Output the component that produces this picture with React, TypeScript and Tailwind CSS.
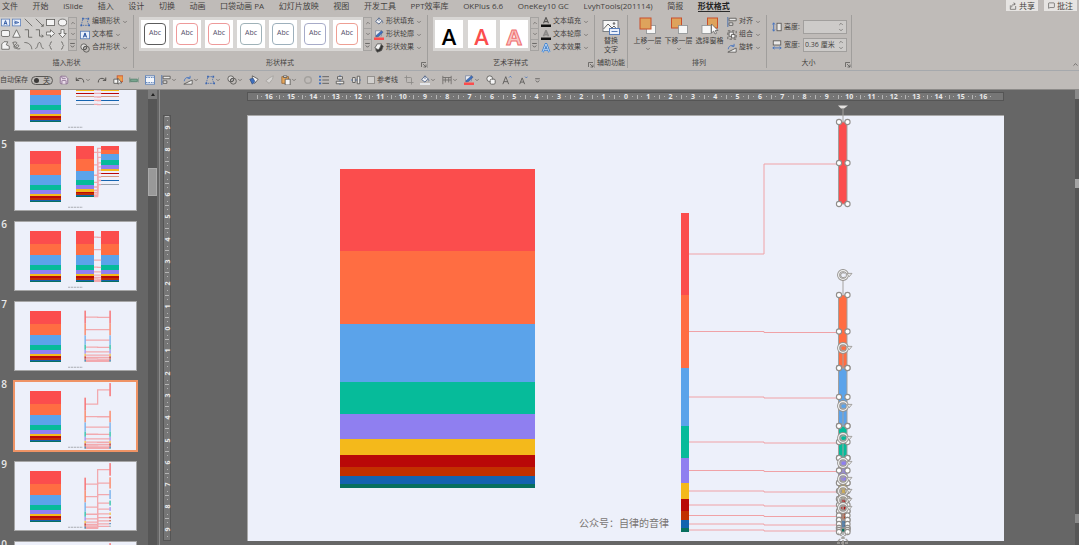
import type { ReactNode } from "react";
import { ChevronDown, ChevronUp, Crop, MessageSquare, Redo, Save, Undo } from "lucide-react";

/* ---------- slide drawing ---------- */

const COLORS = ["#fb4d4d", "#ff6d42", "#5ba3ea", "#06bb9a", "#8f7ff0", "#f4b91b", "#b90808", "#c23000", "#1463b0", "#08705f"];
const HEIGHTS = [82, 73, 58, 32, 25, 16, 12, 9, 8, 4];

type Seg = { y: number; h: number; fill: string };

// Stack the segments from `top`, with an optional gap and a scale on every height.
function stack(top: number, scale = 1, gap = 0): Seg[] {
  let y = top;
  return HEIGHTS.map((height, i) => {
    const seg = { y, h: height * scale, fill: COLORS[i] };
    y += height * scale + gap;
    return seg;
  });
}

const BASE = stack(54);
const LEFT_BAR = stack(98);
const RIGHT_BAR = LEFT_BAR.map((s, i) => (i === 0 ? { ...s, y: 7 } : s));
const SPREAD_BAR = stack(7, 0.96, 10);
// Column whose last segments have collapsed to separate thin strips
const STRIP_COLORS = [...COLORS.slice(0, 7), "#d89a80", "#1463b0", "#98a3b0"];
const COLLAPSED: Seg[] = [27, 50, 77, 114, 144, 168, 192, 214, 236, 262].map((y, i) => ({
  y,
  h: [23, 27, 37, 30, 22, 14, 8, 8, 8, 7][i],
  fill: STRIP_COLORS[i],
}));

const mid = (s: Seg) => s.y + s.h / 2;

function Bar({ x, w, segs, soft = false }: { x: number; w: number; segs: Seg[]; soft?: boolean }) {
  return (
    <g opacity={soft ? 0.7 : 1} shapeRendering={soft ? "auto" : "crispEdges"}>
      {segs.map((s, i) => (
        <rect key={i} x={x} y={s.y} width={w} height={s.h} fill={s.fill} />
      ))}
    </g>
  );
}

function Links({ x1, x2, from, to, width, color }: { x1: number; x2: number; from: Seg[]; to: Seg[]; width: number; color: string }) {
  const half = Math.round((x1 + x2) / 2);
  return (
    <g fill="none" stroke={color} strokeWidth={width}>
      {from.map((s, i) => (
        <path key={i} d={`M${x1} ${mid(s)}H${half}V${mid(to[i]) + 1}H${x2}`} />
      ))}
    </g>
  );
}

function MiniSlide({ kind }: { kind: number }) {
  const link = { width: 8, color: "#f2a9ae" };
  return (
    <svg viewBox="0 0 757 426" className="block w-full bg-[#edf0fa]" aria-hidden="true">
      <Bar x={93} w={195} segs={BASE} />
      {kind === 4 && (
        <>
          <Bar x={381} w={113} segs={COLLAPSED} />
          <Bar x={539} w={113} segs={COLLAPSED} />
          <Links x1={494} x2={539} from={COLLAPSED} to={COLLAPSED} {...link} />
        </>
      )}
      {kind === 5 && (
        <>
          <Bar x={381} w={113} segs={stack(24)} />
          <Bar x={539} w={113} segs={COLLAPSED} />
          <Links x1={494} x2={539} from={stack(24)} to={COLLAPSED} {...link} />
        </>
      )}
      {kind === 6 && (
        <>
          <Bar x={381} w={113} segs={BASE} />
          <Bar x={539} w={113} segs={BASE} />
          <Links x1={494} x2={539} from={BASE} to={BASE} {...link} />
        </>
      )}
      {kind === 7 && (
        <>
          <Links x1={442} x2={591} from={BASE} to={BASE} {...link} />
          <Bar x={434} w={10} segs={BASE} soft />
          <Bar x={590} w={10} segs={BASE} soft />
        </>
      )}
      {kind === 8 && (
        <>
          <Links x1={442} x2={591} from={LEFT_BAR} to={RIGHT_BAR} {...link} />
          <Bar x={434} w={10} segs={LEFT_BAR} soft />
          <Bar x={590} w={10} segs={RIGHT_BAR} soft />
        </>
      )}
      {kind >= 9 && (
        <>
          <Links x1={442} x2={591} from={LEFT_BAR} to={SPREAD_BAR} {...link} />
          <Bar x={434} w={10} segs={LEFT_BAR} soft />
          <Bar x={590} w={10} segs={SPREAD_BAR} soft />
        </>
      )}
      <path d="M332 408H424" stroke="#a9abb2" strokeWidth="7" strokeDasharray="14 4" />
    </svg>
  );
}

function RotateHandle({ y }: { y: number }) {
  return (
    <g fill="none">
      <path d={`M596 ${y + 5}V${y + 19}`} stroke="#a5a29f" />
      <circle cx="596" cy={y} r="4.4" stroke="#96938f" strokeWidth="3" />
      <circle cx="596" cy={y} r="4.4" stroke="#f1f1f1" strokeWidth="1.2" />
      <path d={`M597.8 ${y - 1.6}A2.4 2.4 0 1 0 597.8 ${y + 1.8}`} stroke="#a5a29f" strokeWidth="1.1" />
      <path d={`M599.5 ${y - 1.6}H605L602.2 ${y + 1.8}Z`} fill="#e8e8e8" stroke="#96938f" strokeWidth="0.8" />
    </g>
  );
}

function MainSlide() {
  return (
    <svg viewBox="0 0 757 426" className="block w-full overflow-visible" role="img" aria-label="幻灯片 8">
      <rect x="0" y="0" width="757" height="426" fill="#edf0fa" />
      <path d="M0 0.5H757M0.5 0V426" stroke="#a9a9a9" />
      <Bar x={93} w={195} segs={BASE} />
      <Links x1={442} x2={591} from={LEFT_BAR} to={RIGHT_BAR} width={1} color="#f0a2a6" />
      <Bar x={434} w={8} segs={LEFT_BAR} />
      <Bar x={592} w={8} segs={RIGHT_BAR} />
      <text x="332" y="412" fontSize="10" fill="#7a7674" className="font-['Noto_Sans_CJK_SC',sans-serif] font-normal">
        公众号：自律的音律
      </text>
      <path d="M596 -6V7" stroke="#a5a29f" />
      <path d="M591 -9.5H601L597 -6.5H594Z" fill="#e4e2e0" />
      {RIGHT_BAR.map((s, i) => (
        <g key={i}>
          <rect x="591.5" y={s.y} width="8.5" height={s.h} fill="none" stroke="#a39f9c" />
          {i > 0 && <RotateHandle y={s.y - 20} />}
          {[s.y, mid(s), s.y + s.h].map((y) =>
            [592, 600.5].map((x) => <circle key={`${x}-${y}`} cx={x} cy={y} r="2.6" fill="#fff" stroke="#918e8b" strokeWidth="1.1" />),
          )}
        </g>
      ))}
      <path d="M591 426L601 418M601 426L591 418M596 417V430M590 428H602" stroke="#a5a29f" strokeWidth="1.5" strokeDasharray="3 1" />
    </svg>
  );
}

/* ---------- icons ---------- */

function Ico({ children, className = "size-[10px]" }: { children: ReactNode; className?: string }) {
  return (
    <svg viewBox="0 0 12 12" className={`${className} shrink-0`} fill="none" stroke="#575553" strokeWidth="1" aria-hidden="true">
      {children}
    </svg>
  );
}

const bucket = <path d="M6 1L2 5.5L6 8.5L9.5 4.5L6 1V5M9.5 4.5C11 6 10.6 7.4 10 7.6" stroke="#4d6285" fill="#f4f5f8" />;
const pen = <path d="M2 8.5L3 6L9 0.8L11 2.6L5 8Z" fill="#3c6fc0" stroke="#4d5a75" strokeWidth="0.6" />;
const rings = (
  <>
    <circle cx="4.6" cy="4.6" r="3.6" fill="#dcdad8" />
    <circle cx="7.6" cy="7.4" r="3.6" />
    <circle cx="6" cy="6" r="1.8" />
  </>
);
const editPoints = (
  <>
    <path d="M3.5 2H10L9 6L11 10H1.5Z" strokeDasharray="2 1" stroke="#4a6ea9" />
    <path d="M2.5 1h2v2h-2zM9 1h2v2H9zM0.5 9h2v2h-2zM10 9h2v2h-2z" fill="#3a66b4" stroke="none" />
  </>
);
const alignLeft = (
  <>
    <path d="M1 0V12" stroke="#3b65ac" />
    <path d="M2.5 1.5H11V4.5H2.5ZM2.5 7H7V10H2.5Z" fill="#e8e7e6" />
  </>
);
const rotate = (
  <>
    <path d="M1 11L11 11L11 6Z" fill="#f2f2f2" />
    <path d="M1.5 7.5C2 3.5 5 2 8 3.5M8.5 1V4H5.5" stroke="#3c6fc0" />
  </>
);
const textFrame = (
  <>
    <rect x="0.5" y="1.5" width="11" height="9" fill="#eaf0fb" stroke="#587db8" />
    <path d="M4 9L6 3.5L8 9M4.7 7.2H7.3" stroke="#244f9c" strokeWidth="1.2" />
  </>
);

const SHAPES: ReactNode[] = [
  textFrame,
  <>
    <rect x="0.5" y="1.5" width="11" height="9" fill="#eaf0fb" stroke="#587db8" />
    <path d="M3 4L9 6L3 8M3 6H6" stroke="#244f9c" />
  </>,
  <path d="M1 1L11 11" />,
  <path d="M1 1L11 11M11 8V11H8" />,
  <rect x="0.5" y="2" width="11" height="8" fill="#f4f4f4" />,
  <ellipse cx="6" cy="6" rx="5.5" ry="4.5" fill="#f4f4f4" />,
  <rect x="0.5" y="2" width="11" height="8" rx="2" fill="#f4f4f4" />,
  <path d="M6 1L11 11H1Z" fill="#f4f4f4" />,
  <path d="M1 1H6V11H11" />,
  <path d="M1 1H6V9.5H11M9 7.5L11 9.5L9 11.5" />,
  <path d="M0.5 4H6V1L11.5 6L6 11V8H0.5Z" fill="#f4f4f4" />,
  <path d="M4 0.5H8V6H11L6 11.5L1 6H4Z" fill="#f4f4f4" />,
  <path d="M1 11V4L4 1H9L7 5L11 7V11Z" fill="#f4f4f4" />,
  <path d="M1 2C7 0 8 3 4 5C1 8 3 11 7 9C11 6 8 4 6 6C3 9 8 12 11 10M1 2L4 8" />,
  <path d="M0.5 2C6 2 10 5 10.5 11" />,
  <path d="M0.5 10C4 10 3 2 6 2C9 2 7 10 11.5 10" />,
  <path d="M8 1C5 1 6.5 5 4.5 6C6.5 7 5 11 8 11" />,
  <path d="M4 1C7 1 5.5 5 7.5 6C5.5 7 7 11 4 11" />,
];

function Caret() {
  return <ChevronDown className="size-[6px] shrink-0 text-[#6b6866]" strokeWidth={3} aria-hidden="true" />;
}

/* ---------- ribbon ---------- */

function MenuButton({ icon, label }: { icon: ReactNode; label: string }) {
  return (
    <button type="button" className="flex h-[13px] items-center gap-[2px] whitespace-nowrap text-[7px]">
      <Ico>{icon}</Ico>
      <span>{label}</span>
      <Caret />
    </button>
  );
}

function GalleryScroll() {
  return (
    <div className="mt-[2px] flex h-[34px] w-[9px] shrink-0 flex-col border border-[#a5a3a1]">
      <button type="button" aria-label="上一行" className="flex flex-1 items-center justify-center border-b border-[#a5a3a1]">
        <ChevronUp className="size-[6px]" />
      </button>
      <button type="button" aria-label="下一行" className="flex flex-1 items-center justify-center border-b border-[#a5a3a1]">
        <ChevronDown className="size-[6px]" />
      </button>
      <button type="button" aria-label="更多" className="flex flex-1 items-center justify-center">
        <Ico className="size-[7px]">
          <path d="M2 2.5H10M3 6L6 9L9 6" strokeWidth="1.4" />
        </Ico>
      </button>
    </div>
  );
}

function Group({ label, className, launcher = false, children }: { label: string; className: string; launcher?: boolean; children: ReactNode }) {
  return (
    <section aria-label={label} className={`flex shrink-0 flex-col border-r border-[#a09e9c] ${className}`}>
      <div className="flex h-[40px] items-start">{children}</div>
      <div className="flex flex-1 items-end justify-center text-[7px] leading-[10px]">
        <span className="flex-1 text-center">{label}</span>
        {launcher && (
          <button type="button" aria-label={`${label}设置`}>
            <Ico className="size-[6px]">
              <path d="M1 10V1H10M4 4L10 10M10 5V10H5" strokeWidth="1.5" />
            </Ico>
          </button>
        )}
      </div>
    </section>
  );
}

const STYLE_BORDERS = [
  "border-[#5c5c5c]",
  "border-[#ee9a9a]",
  "border-[#ee9a9a]",
  "border-[#9fb2b8]",
  "border-[#9db0bc]",
  "border-[#a7abc8]",
  "border-[#ee9f93]",
];

function LayerIcon({ back = false, cursor = false }: { back?: boolean; cursor?: boolean }) {
  return (
    <svg viewBox="0 0 18 18" className="size-[18px]" aria-hidden="true">
      {back || cursor ? (
        <>
          <rect x={cursor ? 6.5 : 1.5} y="1" width="10" height="10" fill="#dea35c" stroke="#c94f2b" />
          <rect x={cursor ? 1 : 8.5} y="8.5" width="9" height="8" fill="#f6f7f7" stroke="#8b8e90" strokeWidth="0.8" />
        </>
      ) : (
        <>
          <rect x="7.5" y="8.5" width="9" height="8" fill="#f6f7f7" stroke="#8b8e90" strokeWidth="0.8" />
          <rect x="1" y="1" width="11" height="11" fill="#dea35c" stroke="#c94f2b" />
        </>
      )}
      {cursor && <path d="M10.5 7V16L12.7 14L14 17L15.5 16.3L14.2 13.5H17Z" fill="#fff" stroke="#555" strokeWidth="0.7" />}
    </svg>
  );
}

function LayerButton({ label, caret = true, children }: { label: string; caret?: boolean; children: ReactNode }) {
  return (
    <button type="button" className="flex w-[31px] flex-col items-center whitespace-nowrap pt-[2px] text-[7px] leading-[11px]">
      {children}
      <span>{label}</span>
      {caret && <Caret />}
    </button>
  );
}

function SizeField({ id, label, value, icon }: { id: string; label: string; value: string; icon: ReactNode }) {
  return (
    <div className="flex h-[14px] items-center gap-[2px] text-[7px]">
      <Ico>{icon}</Ico>
      <label htmlFor={id} className="w-[17px] whitespace-nowrap">
        {label}
      </label>
      <div className="flex h-[14px] w-[44px] items-center border border-[#a19f9d] bg-[#cdcbc9] pr-[2px]">
        <input id={id} defaultValue={value} className="w-full min-w-0 flex-1 bg-transparent pl-[1px] outline-none" />
        <span className="flex flex-col" aria-hidden="true">
          <ChevronUp className="size-[6px]" />
          <ChevronDown className="size-[6px]" />
        </span>
      </div>
    </div>
  );
}

const TABS = [
  "文件", "开始", "iSlide", "插入", "设计", "切换", "动画", "口袋动画 PA", "幻灯片放映", "视图",
  "开发工具", "PPT效率库", "OKPlus 6.6", "OneKey10 GC", "LvyhTools(201114)", "简报", "形状格式",
];

function TabBar() {
  return (
    <div className="flex h-[15px] items-start justify-between">
      <nav className="flex w-[730px] justify-between whitespace-nowrap pl-[2px] text-[8px] leading-[11px]">
        {TABS.map((tab) => (
          <a key={tab} href="#" className={tab === "形状格式" ? "border-b border-[#2b2b2b] font-bold text-[#222]" : ""}>
            {tab}
          </a>
        ))}
      </nav>
      <div className="flex gap-[6px] pr-[2px] text-[8px] leading-[11px]">
        <button type="button" className="flex h-[11px] w-[32px] items-center justify-center gap-[2px] bg-[#e6e4e2]">
          <Ico className="size-[8px]">
            <path d="M2 5V11H10V6M4 8C4 4 6 3 9 3M7 1L9.5 3L7 5" />
          </Ico>
          共享
        </button>
        <button type="button" className="flex h-[11px] w-[33px] items-center justify-center gap-[2px] bg-[#e6e4e2]">
          <MessageSquare className="size-[7px]" />
          批注
        </button>
      </div>
    </div>
  );
}

function Ribbon() {
  return (
    <div className="flex h-[56px] border-b border-[#a6a9ad] pb-[2px]">
      <Group label="插入形状" className="w-[134px]">
        <div className="mt-[2px] grid h-[34px] w-[68px] shrink-0 grid-cols-6 place-items-center bg-[#cfcdcb]">
          {SHAPES.map((shape, i) => (
            <Ico key={i} className="size-[9px]">
              {shape}
            </Ico>
          ))}
        </div>
        <GalleryScroll />
        <div className="flex flex-col pl-[3px]">
          <MenuButton icon={editPoints} label="编辑形状" />
          <MenuButton icon={textFrame} label="文本框" />
          <MenuButton icon={rings} label="合并形状" />
        </div>
      </Group>

      <Group label="形状样式" className="w-[294px] pl-[5px]" launcher>
        <div className="mt-[2px] flex h-[34px] w-[224px] shrink-0 items-center justify-between bg-[#d8d6d4] px-[2px]">
          {STYLE_BORDERS.map((border, i) => (
            <button key={i} type="button" className="flex size-[28px] items-center justify-center bg-white">
              <span className={`flex size-[22px] items-center justify-center rounded-[4px] border pb-[2px] text-[7px] text-[#56506a] ${border}`}>Abc</span>
            </button>
          ))}
        </div>
        <GalleryScroll />
        <div className="flex flex-col pl-[2px]">
          <MenuButton icon={bucket} label="形状填充" />
          <MenuButton
            icon={
              <>
                <rect x="2" y="1" width="7" height="6" fill="#eef1f7" stroke="#7f8ba3" />
                {pen}
                <path d="M0 10.5H12" stroke="#fb4d4d" strokeWidth="3" />
              </>
            }
            label="形状轮廓"
          />
          <MenuButton
            icon={
              <>
                <path d="M2 8L4 11L9 9L11 4L9 2Z" fill="#333" />
                <path d="M1 6L4 1H9L7 6L5 8Z" fill="#f4f4f4" />
              </>
            }
            label="形状效果"
          />
        </div>
      </Group>

      <Group label="艺术字样式" className="w-[167px] pl-[5px]" launcher>
        <div className="mt-[2px] flex h-[34px] w-[97px] shrink-0 items-center justify-between bg-[#d8d6d4] px-[2px]">
          <button type="button" className="flex size-[28px] items-center justify-center bg-white pt-[3px] text-[22px] font-semibold leading-none text-black">
            A
          </button>
          <button type="button" className="flex size-[28px] items-center justify-center bg-white pt-[3px] text-[22px] font-semibold leading-none text-[#fb4d4d]">
            A
          </button>
          <button
            type="button"
            className="flex size-[28px] items-center justify-center bg-white pt-[3px] text-[22px] font-bold leading-none text-[#f9c3c3] [-webkit-text-stroke:1px_#f07070]"
          >
            A
          </button>
        </div>
        <GalleryScroll />
        <div className="flex flex-col pl-[2px]">
          <MenuButton
            icon={
              <>
                <path d="M3 7.5L6 0.5L9 7.5M4 5.5H8" strokeWidth="1.3" />
                <path d="M0 10.5H12" stroke="#111" strokeWidth="3" />
              </>
            }
            label="文本填充"
          />
          <MenuButton
            icon={
              <>
                <path d="M3 7.5L6 0.5L9 7.5M4 5.5H8" stroke="#8c8a88" strokeWidth="2" />
                <path d="M0 10.5H12" stroke="#111" strokeWidth="3" />
              </>
            }
            label="文本轮廓"
          />
          <MenuButton
            icon={
              <>
                <path d="M2 11L6 1L10 11M4 8H8" stroke="#2f79cf" strokeWidth="2.8" />
                <path d="M2 11L6 1L10 11M4 8H8" stroke="#dcebfb" />
              </>
            }
            label="文本效果"
          />
        </div>
      </Group>

      <Group label="辅助功能" className="w-[33px]">
        <button type="button" className="flex w-full flex-col items-center pt-[3px] text-[7px] leading-[9px]">
          <svg viewBox="0 0 18 18" className="size-[18px]" aria-hidden="true">
            <rect x="1" y="2.5" width="15" height="11" fill="#f6f7f7" stroke="#7c7f82" />
            <path d="M1.5 11L6 6L10 10L12 8L15.5 12" fill="none" stroke="#666" />
            <circle cx="12" cy="5.5" r="1.3" fill="#777" />
            <rect x="7.5" y="10.5" width="10" height="6" fill="#eaf0fb" stroke="#587db8" />
            <path d="M9.5 13.5H15.5" stroke="#587db8" />
          </svg>
          <span>替换</span>
          <span>文字</span>
        </button>
      </Group>

      <Group label="排列" className="w-[139px] pl-[4px]">
        <LayerButton label="上移一层">
          <LayerIcon />
        </LayerButton>
        <LayerButton label="下移一层">
          <LayerIcon back />
        </LayerButton>
        <LayerButton label="选择窗格" caret={false}>
          <LayerIcon cursor />
        </LayerButton>
        <div className="flex flex-col pl-[2px]">
          <MenuButton icon={alignLeft} label="对齐" />
          <MenuButton
            icon={
              <>
                <rect x="1" y="1" width="10" height="10" strokeDasharray="3 2" />
                <rect x="2.5" y="2.5" width="5" height="5" fill="#f2f2f2" />
                <rect x="5.5" y="5.5" width="4" height="4" fill="#f2f2f2" />
              </>
            }
            label="组合"
          />
          <MenuButton icon={rotate} label="旋转" />
        </div>
      </Group>

      <Group label="大小" className="w-[85px] pl-[5px]" launcher>
        <div className="flex flex-col gap-[4px] pt-[5px]">
          <SizeField
            id="shape-height"
            label="高度:"
            value=""
            icon={
              <>
                <path d="M2 1V11M0.5 3L2 1L3.5 3M0.5 9L2 11L3.5 9" stroke="#3c6fc0" />
                <rect x="6" y="1.5" width="5" height="9" fill="#e9e8e7" />
              </>
            }
          />
          <SizeField
            id="shape-width"
            label="宽度:"
            value="0.36 厘米"
            icon={
              <>
                <rect x="1.5" y="1" width="9" height="5" fill="#e9e8e7" />
                <path d="M1 9.5H11M3 8L1 9.5L3 11M9 8L11 9.5L9 11" stroke="#3c6fc0" />
              </>
            }
          />
        </div>
      </Group>

      <div className="flex flex-1 items-end justify-end">
        <button type="button" aria-label="折叠功能区">
          <ChevronUp className="size-[7px]" />
        </button>
      </div>
    </div>
  );
}

/* ---------- quick access toolbar ---------- */

function Tool({ label, caret = false, children }: { label: string; caret?: boolean; children: ReactNode }) {
  return (
    <button type="button" aria-label={label} className="flex shrink-0 items-center">
      {children}
      {caret && <Caret />}
    </button>
  );
}

function QuickAccess() {
  return (
    <div className="flex h-[19px] items-center gap-[6px] border-b border-[#8d8b89] text-[7px]">
      <span className="whitespace-nowrap">自动保存</span>
      <button
        type="button"
        role="switch"
        aria-checked="false"
        aria-label="自动保存"
        className="-ml-[3px] flex h-[9px] w-[22px] shrink-0 items-center justify-between rounded-full border border-[#5b5957] px-[2px] leading-none"
      >
        <span className="size-[5px] rounded-full bg-[#3d3b3a]" />关
      </button>
      <Tool label="保存">
        <Save className="size-[10px] fill-[#e9dbe8] text-[#84688a]" />
      </Tool>
      <Tool label="撤消" caret>
        <Undo className="size-[10px]" />
      </Tool>
      <Tool label="恢复">
        <Redo className="size-[10px]" />
      </Tool>
      <Tool label="选择窗格">
        <Ico>
          <rect x="5" y="1" width="7" height="7" fill="#ee9f4d" stroke="#c9502c" />
          <path d="M1 5H6V10H1Z" fill="#f5f5f5" />
          <path d="M6 4V11L8 9.5H10.5Z" fill="#fff" />
        </Ico>
      </Tool>
      <Tool label="等高">
        <Ico>
          <path d="M1 3V9M12 3V9" stroke="#56826d" />
          <path d="M2 5H10V8H2Z" fill="#79a58f" stroke="#56826d" />
        </Ico>
      </Tool>
      <Tool label="版式">
        <Ico>
          <rect x="0.5" y="1" width="11" height="10" fill="#f3f6fb" stroke="#547bb5" />
          <path d="M1 3H11M1 9H11" stroke="#547bb5" strokeDasharray="2 1" />
        </Ico>
      </Tool>
      <Tool label="对齐" caret>
        <Ico>{alignLeft}</Ico>
      </Tool>
      <Tool label="旋转" caret>
        <Ico>{rotate}</Ico>
      </Tool>
      <Tool label="编辑形状" caret>
        <Ico>{editPoints}</Ico>
      </Tool>
      <Tool label="合并形状" caret>
        <Ico>{rings}</Ico>
      </Tool>
      <Tool label="格式刷">
        <Ico>
          <path d="M4 1L11 5L7 10L4 8Z" fill="#f4f4f4" />
          <path d="M1 5L5 4L7 8L4 11Z" fill="#3c6fc0" stroke="#3a5687" />
        </Ico>
      </Tool>
      <Tool label="取色器">
        <Ico>
          <path d="M1 7L6 3L10 1L9 5L5 10Z" fill="#d6d4d2" stroke="#a6a3a0" />
        </Ico>
      </Tool>
      <Tool label="粘贴" caret>
        <Ico>
          <path d="M1 2H9V10H1Z" fill="#e6a65a" stroke="#9a6a38" />
          <path d="M3 1H7V3H3ZM5 5H11V12H5Z" fill="#f5f5f5" />
        </Ico>
      </Tool>
      <Tool label="圆形">
        <Ico>
          <circle cx="6" cy="6" r="4" stroke="#a4a19e" strokeWidth="1.8" />
        </Ico>
      </Tool>
      <Tool label="项目符号">
        <Ico>
          <path d="M0 2H2.5M0 6H2.5M0 10H2.5" stroke="#3c6fc0" strokeWidth="2" />
          <path d="M4 2H12M4 6H12M4 10H12" />
        </Ico>
      </Tool>
      <Tool label="水平居中">
        <Ico>
          <path d="M6 0V12" stroke="#3c6fc0" />
          <path d="M3 2H9V5H3ZM1.5 7.5H10.5V10.5H1.5Z" fill="#ecebea" />
        </Ico>
      </Tool>
      <Tool label="垂直居中">
        <Ico>
          <path d="M0 6H12" stroke="#3c6fc0" />
          <path d="M2 3H5V9H2ZM7.5 1.5H10.5V10.5H7.5Z" fill="#ecebea" />
        </Ico>
      </Tool>
      <label className="flex items-center gap-[2px] whitespace-nowrap">
        <input type="checkbox" className="size-[8px] appearance-none border border-[#94918e] bg-[#d3d1cf]" />
        参考线
      </label>
      <Tool label="裁剪">
        <Crop className="size-[10px] text-[#8c8987]" strokeWidth={2} />
      </Tool>
      <Tool label="形状填充" caret>
        <Ico>
          {bucket}
          <path d="M0 10.8H12" stroke="#eceff5" strokeWidth="2" />
        </Ico>
      </Tool>
      <Tool label="表格" caret>
        <Ico>
          <path d="M1 1V11M11 1V11M1 3H11M4 3V9M8 3V9M1 6H11" stroke="#6d6b69" />
        </Ico>
      </Tool>
      <Tool label="形状轮廓" caret>
        <Ico>
          <rect x="2" y="1" width="7" height="6" fill="#eef1f7" stroke="#7f8ba3" />
          {pen}
          <path d="M0 10.5H12" stroke="#fb4d4d" strokeWidth="3" />
        </Ico>
      </Tool>
      <Tool label="叠放形状">
        <Ico>
          <circle cx="4.5" cy="4.5" r="3.5" fill="#f4f4f4" />
          <rect x="5" y="5" width="6" height="6" rx="1.5" fill="#f4f4f4" />
        </Ico>
      </Tool>
      <Tool label="增大字号">
        <Ico>
          <path d="M1 11L4.5 2L8 11M2.2 8H6.8" />
          <path d="M8.5 3L10 1.5L11.5 3" stroke="#3c6fc0" />
        </Ico>
      </Tool>
      <Tool label="减小字号">
        <Ico>
          <path d="M2 11L5 3.5L8 11M3 8.5H7" />
          <path d="M8.5 2L10 3.5L11.5 2" stroke="#3c6fc0" />
        </Ico>
      </Tool>
      <Tool label="自定义快速访问工具栏">
        <Ico className="size-[7px]">
          <path d="M2 3H10M3 6L6 9L9 6" strokeWidth="1.4" />
        </Ico>
      </Tool>
    </div>
  );
}

/* ---------- workspace ---------- */

function SlideList() {
  return (
    <aside className="flex w-[160px] shrink-0 overflow-hidden border-r border-[#8b8b8b]">
      {/* scrolled so that slide 4 is cut by the toolbar, below its number */}
      <ol className="-mt-[28px] flex w-[148px] flex-col gap-[12px]">
        {[4, 5, 6, 7, 8, 9, 10].map((n) => (
          <li key={n} className="flex h-[68px] shrink-0 gap-[8px]">
            <span className="flex w-[7px] shrink-0 justify-end text-[10px] font-semibold leading-[5px] text-[#e8e8e8]">{n > 4 && n}</span>
            <button
              type="button"
              aria-label={`幻灯片 ${n}`}
              className={`h-[68px] w-[121px] shrink-0 overflow-hidden outline ${n === 8 ? "outline-2 outline-[#ef9365]" : "outline-1 outline-[#a6a6a6]"}`}
            >
              <MiniSlide kind={n} />
            </button>
          </li>
        ))}
      </ol>
      <div className="flex w-[9px] flex-col bg-[#565656]">
        <div className="flex h-[9px] items-center justify-center bg-[#7d7d7d]">
          <span className="border-x-2 border-b-3 border-x-transparent border-b-[#222]" />
        </div>
        <div className="mt-[69px] h-[28px] border border-[#aaa] bg-[#999]" />
      </div>
    </aside>
  );
}

const H_MARKS = Array.from({ length: 33 }, (_, i) => Math.abs(i - 16));
const V_MARKS = Array.from({ length: 19 }, (_, i) => Math.abs(i - 9));

function Editor() {
  return (
    <main className="grid min-w-0 flex-1 grid-cols-[8px_minmax(0,1fr)] grid-rows-[9px_auto] content-start gap-x-[76px] gap-y-[14px] overflow-hidden pl-[3px] pr-[71px] pt-[2px] text-[7px] font-bold leading-none text-[#e9e9e9]">
      <div />
      <div className="flex border border-[#555] bg-[#767676] px-[9px]">
        {H_MARKS.map((n, i) => (
          <div key={i} className="flex min-w-0 flex-1 items-center justify-between">
            <span className="h-[4px] w-px bg-[#b5b5b5]" />
            <span className="size-px bg-[#b5b5b5]" />
            <span>{n}</span>
            <span className="size-px bg-[#b5b5b5]" />
            <span />
          </div>
        ))}
      </div>
      <div className="flex flex-col border border-[#555] bg-[#767676]">
        {V_MARKS.map((n, i) => (
          <div key={i} className="flex min-h-0 flex-1 flex-col items-center justify-between">
            <span className="h-px w-[4px] bg-[#b5b5b5]" />
            <span className="size-px bg-[#b5b5b5]" />
            <span className="-rotate-90">{n}</span>
            <span className="size-px bg-[#b5b5b5]" />
            <span />
          </div>
        ))}
      </div>
      <MainSlide />
    </main>
  );
}

export default function App() {
  return (
    <div className="flex h-screen flex-col overflow-hidden bg-[#bfbbb8] font-['Open_Sans','Noto_Sans_CJK_SC',sans-serif] text-[#444240]">
      <header className="shrink-0">
        <TabBar />
        <Ribbon />
        <QuickAccess />
      </header>
      <div className="flex min-h-0 flex-1 bg-[#666]">
        <SlideList />
        <Editor />
        <div className="flex w-[4px] flex-col bg-[#565656]">
          <div className="h-[9px] bg-[#8a8a8a]" />
          <div className="mt-[80px] h-[9px] bg-[#a5a5a5]" />
          <div className="mb-[22px] mt-auto h-[9px] bg-[#8a8a8a]" />
        </div>
      </div>
    </div>
  );
}
